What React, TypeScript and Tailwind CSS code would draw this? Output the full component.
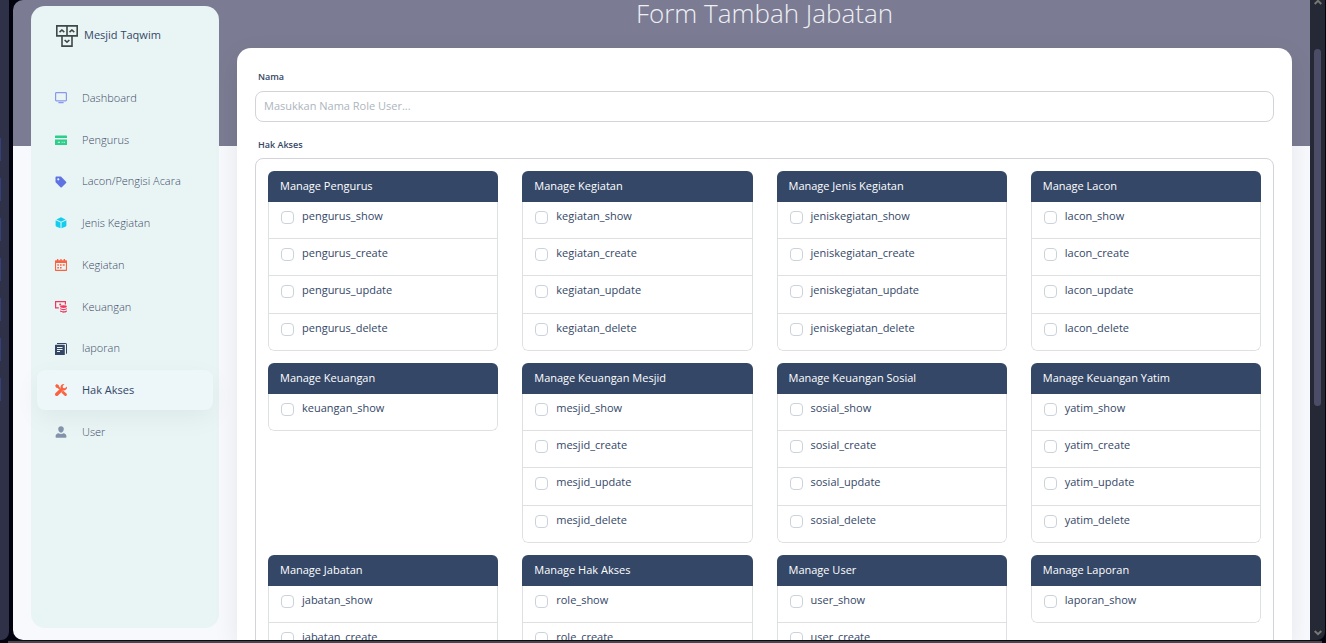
import { useState } from "react";
import type { ReactNode } from "react";

type NavItem = { label: string; icon: ReactNode };
type Group = { title: string; items: string[] };

const navItems: NavItem[] = [
  {
    label: "Dashboard",
    icon: (
      <g fill="none" stroke="#8898ec">
        <rect x="0.6" y="0.6" width="10.8" height="8.3" rx="0.8" strokeWidth="1.2" />
        <path d="M3.4 10.6h5.2" strokeWidth="1.3" />
      </g>
    ),
  },
  {
    label: "Pengurus",
    icon: (
      <g fill="#2dce89">
        <path d="M0.6 1.5h10.8a.6.6 0 0 1 .6.6V4H0V2.100a.6.6 0 0 1 .6-.6z" />
        <path
          fillRule="evenodd"
          d="M0 5.500h12v4.900a.6.6 0 0 1-.6.6H.6a.6.6 0 0 1-.6-.6zM2.800 7.700v1h2.200v-1zM6.600 7.700v1h1v-1zM8.600 7.700v1h1.300v-1z"
        />
      </g>
    ),
  },
  {
    label: "Lacon/Pengisi Acara",
    icon: (
      <path
        fill="#5e72e4"
        fillRule="evenodd"
        d="M1.200.6h4.500c.3 0 .5.1.7.3l4.700 4.800c.4.4.4.9 0 1.300l-4.300 4.200c-.4.4-.9.4-1.300 0L.8 6.500a1 1 0 0 1-.3-.7V1.300c0-.4.3-.7.700-.7zM3.300 2.200a1.100 1.100 0 1 0 0 2.200 1.100 1.100 0 0 0 0-2.200z"
      />
    ),
  },
  {
    label: "Jenis Kegiatan",
    icon: (
      <g fill="#11cdef">
        <path d="M6 0.300l4.600 2.100L6 4.700 1.400 2.400z" />
        <path d="M0.600 3.200l4.900 2.400v5.700L1.200 9.500a1 1 0 0 1-.6-.9z" />
        <path d="M11.400 3.200L6.500 5.600v5.700l4.300-1.800a1 1 0 0 0 .6-.9z" />
      </g>
    ),
  },
  {
    label: "Kegiatan",
    icon: (
      <path
        fill="#fb6340"
        fillRule="evenodd"
        d="M2 0h1.300v1.200h2V0h1.300v1.200h2V0H10v1.200h1.400a.6.6 0 0 1 .6.6v9.500a.6.6 0 0 1-.6.6H.6a.6.6 0 0 1-.6-.6V1.800a.6.6 0 0 1 .6-.6H2zM1.100 4v6.800h9.800V4zM2.300 5.200h1.600v1.500H2.300zM5 5.200h1.600v1.500H5zM7.700 5.200h2v1.500h-2zM2.300 7.900h1.600v1.500H2.300zM5 7.900h1.600v1.500H5z"
      />
    ),
  },
  {
    label: "Keuangan",
    icon: (
      <g>
        <path d="M3.800 6.800H.6V.6h9.800v2.800" fill="none" stroke="#f5365c" strokeWidth="1.2" />
        <circle cx="5.200" cy="3.600" r="1" fill="#f5365c" />
        <g fill="#f5365c">
          <ellipse cx="8.500" cy="5.600" rx="3.400" ry="1.400" />
          <path d="M5.100 7c1.500 1.300 5.300 1.300 6.800 0v1.100c-1.500 1.500-5.300 1.500-6.800 0z" />
          <path d="M5.100 9.300c1.500 1.300 5.300 1.300 6.800 0v1.300c-1.500 1.600-5.300 1.600-6.800 0z" />
        </g>
      </g>
    ),
  },
  {
    label: "laporan",
    icon: (
      <g>
        <path d="M2 .5h8.900a.6.6 0 0 1 .6.6v9.600" fill="none" stroke="#344767" strokeWidth="1" />
        <path
          fill="#344767"
          fillRule="evenodd"
          d="M.6 1.800h8.600a.6.6 0 0 1 .6.6V12H.6a.6.6 0 0 1-.6-.6V2.400A.6.6 0 0 1 .6 1.800zM2 4v1h5.500V4zM2 6v1h5.500V6zM2 8v1h3V8z"
        />
      </g>
    ),
  },
  {
    label: "Hak Akses",
    icon: (
      <g fill="#fb6340">
        <path d="M9.400.1a3.200 3.200 0 0 0-3.700 4.200L.6 9.100a1.700 1.700 0 1 0 2.400 2.400L8 6.400a3.200 3.200 0 0 0 3.900-3.800L10 4.300 8 4 7.700 2z" />
        <path d="M.1 1.700L1.700.1l2.100 1.200.2 1.300 1.800 1.800-1.300 1.400-1.900-1.900-1.300-.2z" />
        <path d="M8.100 6.600l3.500 3.200a1.400 1.400 0 0 1-1.900 2L6.300 8.400z" />
      </g>
    ),
  },
  {
    label: "User",
    icon: (
      <g fill="#8392ab">
        <path d="M6 .2c1.700 0 2.800 1.200 2.800 2.900S7.600 6.700 6 6.700 3.200 4.800 3.200 3.100 4.300.2 6 .2z" />
        <path d="M3.600 7.300c1.300.8 3.500.8 4.800 0 1.800.3 3 1.200 3 2.800v1c0 .4-.3.7-.7.7H1.300a.7.7 0 0 1-.7-.7v-1c0-1.600 1.200-2.500 3-2.800z" />
      </g>
    ),
  },
];

const crud = (name: string) => ["show", "create", "update", "delete"].map((a) => `${name}_${a}`);

const groups: Group[] = [
  { title: "Manage Pengurus", items: crud("pengurus") },
  { title: "Manage Kegiatan", items: crud("kegiatan") },
  { title: "Manage Jenis Kegiatan", items: crud("jeniskegiatan") },
  { title: "Manage Lacon", items: crud("lacon") },
  { title: "Manage Keuangan", items: ["keuangan_show"] },
  { title: "Manage Keuangan Mesjid", items: crud("mesjid") },
  { title: "Manage Keuangan Sosial", items: crud("sosial") },
  { title: "Manage Keuangan Yatim", items: crud("yatim") },
  { title: "Manage Jabatan", items: crud("jabatan") },
  { title: "Manage Hak Akses", items: crud("role") },
  { title: "Manage User", items: crud("user") },
  { title: "Manage Laporan", items: ["laporan_show"] },
];

function Logo() {
  return (
    <svg viewBox="0 0 22 22" className="size-[22px] shrink-0" fill="none" stroke="#3f4747" strokeWidth="1.6" aria-hidden="true">
      <path d="M.8.9h20.400v10H.8zM11 .9v10M6 10.900v10.200h10V10.900" />
      <path d="M3.500 7.200l2.400-2.200L8.300 7.200M13.500 7.200l2.400-2.200L18.300 7.200M8.600 15l2.400 2.200 2.400-2.200" />
    </svg>
  );
}

function Sidebar() {
  return (
    <aside className="mt-[6px] mb-3 flex w-[188px] shrink-0 flex-col rounded-[14px] bg-[#e9f5f5]">
      <a href="#home" className="flex h-[72px] items-start gap-[6px] pt-[19px] pl-[25px] text-[11px] font-medium text-[#344767]">
        <Logo />
        <span className="leading-5">Mesjid Taqwim</span>
      </a>
      <nav className="flex h-[374px] flex-col justify-between px-[6px]">
        {navItems.map(({ label, icon }) => {
          const active = label === "Hak Akses";
          return (
            <a
              key={label}
              href={`#${label}`}
              aria-current={active ? "page" : undefined}
              className={
                active
                  ? "flex h-10 items-center gap-[15px] rounded-lg bg-[#edf6f8] pl-[18px] text-[11px] font-medium text-[#344767] shadow-[0_8px_26px_rgba(20,20,20,0.05)]"
                  : "flex h-10 items-center gap-[15px] rounded-lg pl-[18px] text-[11px] font-light text-[#3c4966]"
              }
            >
              <svg viewBox="0 0 12 12" className="size-3 shrink-0" aria-hidden="true">
                {icon}
              </svg>
              {label}
            </a>
          );
        })}
      </nav>
    </aside>
  );
}

function PermissionCard({ group }: { group: Group }) {
  return (
    <section className="self-start overflow-hidden rounded-md">
      <h2 className="h-[31px] bg-[#344767] px-3 text-[11px] leading-[30px] font-medium text-white">{group.title}</h2>
      <ul className="rounded-b-md border-x border-b border-[#dee0e2]">
        {group.items.map((item) => (
          <li key={item} className="h-[37px] border-b border-[#dee0e2] last:h-9 last:border-b-0 nth-3:h-[38px]">
            <label className="flex items-start gap-2 pt-[6px] pl-3 text-[11px] leading-4 text-[#344767]">
              <input
                type="checkbox"
                name={item}
                className="mt-[3px] size-[13px] shrink-0 appearance-none rounded-[4px] border border-[#cbd3da] bg-white checked:bg-[#344767]"
              />
              {item}
            </label>
          </li>
        ))}
      </ul>
    </section>
  );
}

function Scrollbar() {
  return (
    <div className="mr-px flex w-[15px] shrink-0 flex-col items-center rounded-br-lg bg-[#252935]" aria-hidden="true">
      <svg viewBox="0 0 8 5" className="h-[5px] w-2" fill="none" stroke="#777872" strokeWidth="2">
        <path d="M.7 4L4 .8 7.300 4" />
      </svg>
      <div className="mt-11 h-[357px] w-[7px] rounded-full bg-[#4b4c65]" />
      <svg viewBox="0 0 8 6" className="mt-auto mb-1 h-[6px] w-2" fill="none" stroke="#777872" strokeWidth="2">
        <path d="M.7 1L4 4.200 7.300 1" />
      </svg>
    </div>
  );
}

function EditorEdge() {
  return (
    <div className="flex w-[9px] shrink-0 flex-col gap-[17px] rounded-br-lg bg-[#2e3148] pt-[138px]" aria-hidden="true">
      {[0, 1, 2, 3, 4, 5, 6].map((i) => (
        <span key={i} className="h-[23px] w-px bg-[#33407c]" />
      ))}
    </div>
  );
}

export default function App() {
  const [name, setName] = useState("");
  return (
    <div className="flex h-screen flex-col overflow-hidden bg-[#02030f] font-['Open_Sans',sans-serif]">
      <div className="flex min-h-0 flex-1">
        <EditorEdge />
        <div className="ml-1 flex min-w-0 flex-1 overflow-hidden rounded-l-[10px] bg-[linear-gradient(#7b7b93_146px,#f8f9fc_146px)] px-[18px]">
          <Sidebar />
          <main className="ml-[18px] flex min-w-0 flex-1 flex-col">
            <h1 className="h-12 shrink-0 text-center text-[26px] leading-[26px] font-light text-[#eef0f4]">Form Tambah Jabatan</h1>
            <form className="min-h-0 flex-1 rounded-t-[14px] bg-white px-[18px] pt-[21px] shadow-[0_8px_26px_rgba(20,20,20,0.08)]">
              <label htmlFor="nama" className="block pl-[3px] text-[9px] leading-4 font-semibold text-[#344767]">
                Nama
              </label>
              <input
                id="nama"
                value={name}
                onChange={(e) => setName(e.target.value)}
                placeholder="Masukkan Nama Role User..."
                className="mt-[6px] block h-[31px] w-full rounded-lg border border-[#d2d4da] bg-white px-2 pb-[2px] text-[11px] text-[#495057] placeholder:text-[#adb5bd]"
              />
              <fieldset>
                <legend className="block pt-[15px] pb-[5px] pl-[3px] text-[9px] leading-4 font-semibold text-[#344767]">
                  Hak Akses
                </legend>
                <div className="grid grid-cols-4 gap-x-6 gap-y-3 rounded-lg border border-[#d2d4da] p-3">
                  {groups.map((g) => (
                    <PermissionCard key={g.title} group={g} />
                  ))}
                </div>
              </fieldset>
            </form>
          </main>
        </div>
        <Scrollbar />
      </div>
      <div className="mr-1 ml-2 h-[3px] shrink-0 border-t border-[#0a0a12] bg-[#45454b]" aria-hidden="true" />
    </div>
  );
}
